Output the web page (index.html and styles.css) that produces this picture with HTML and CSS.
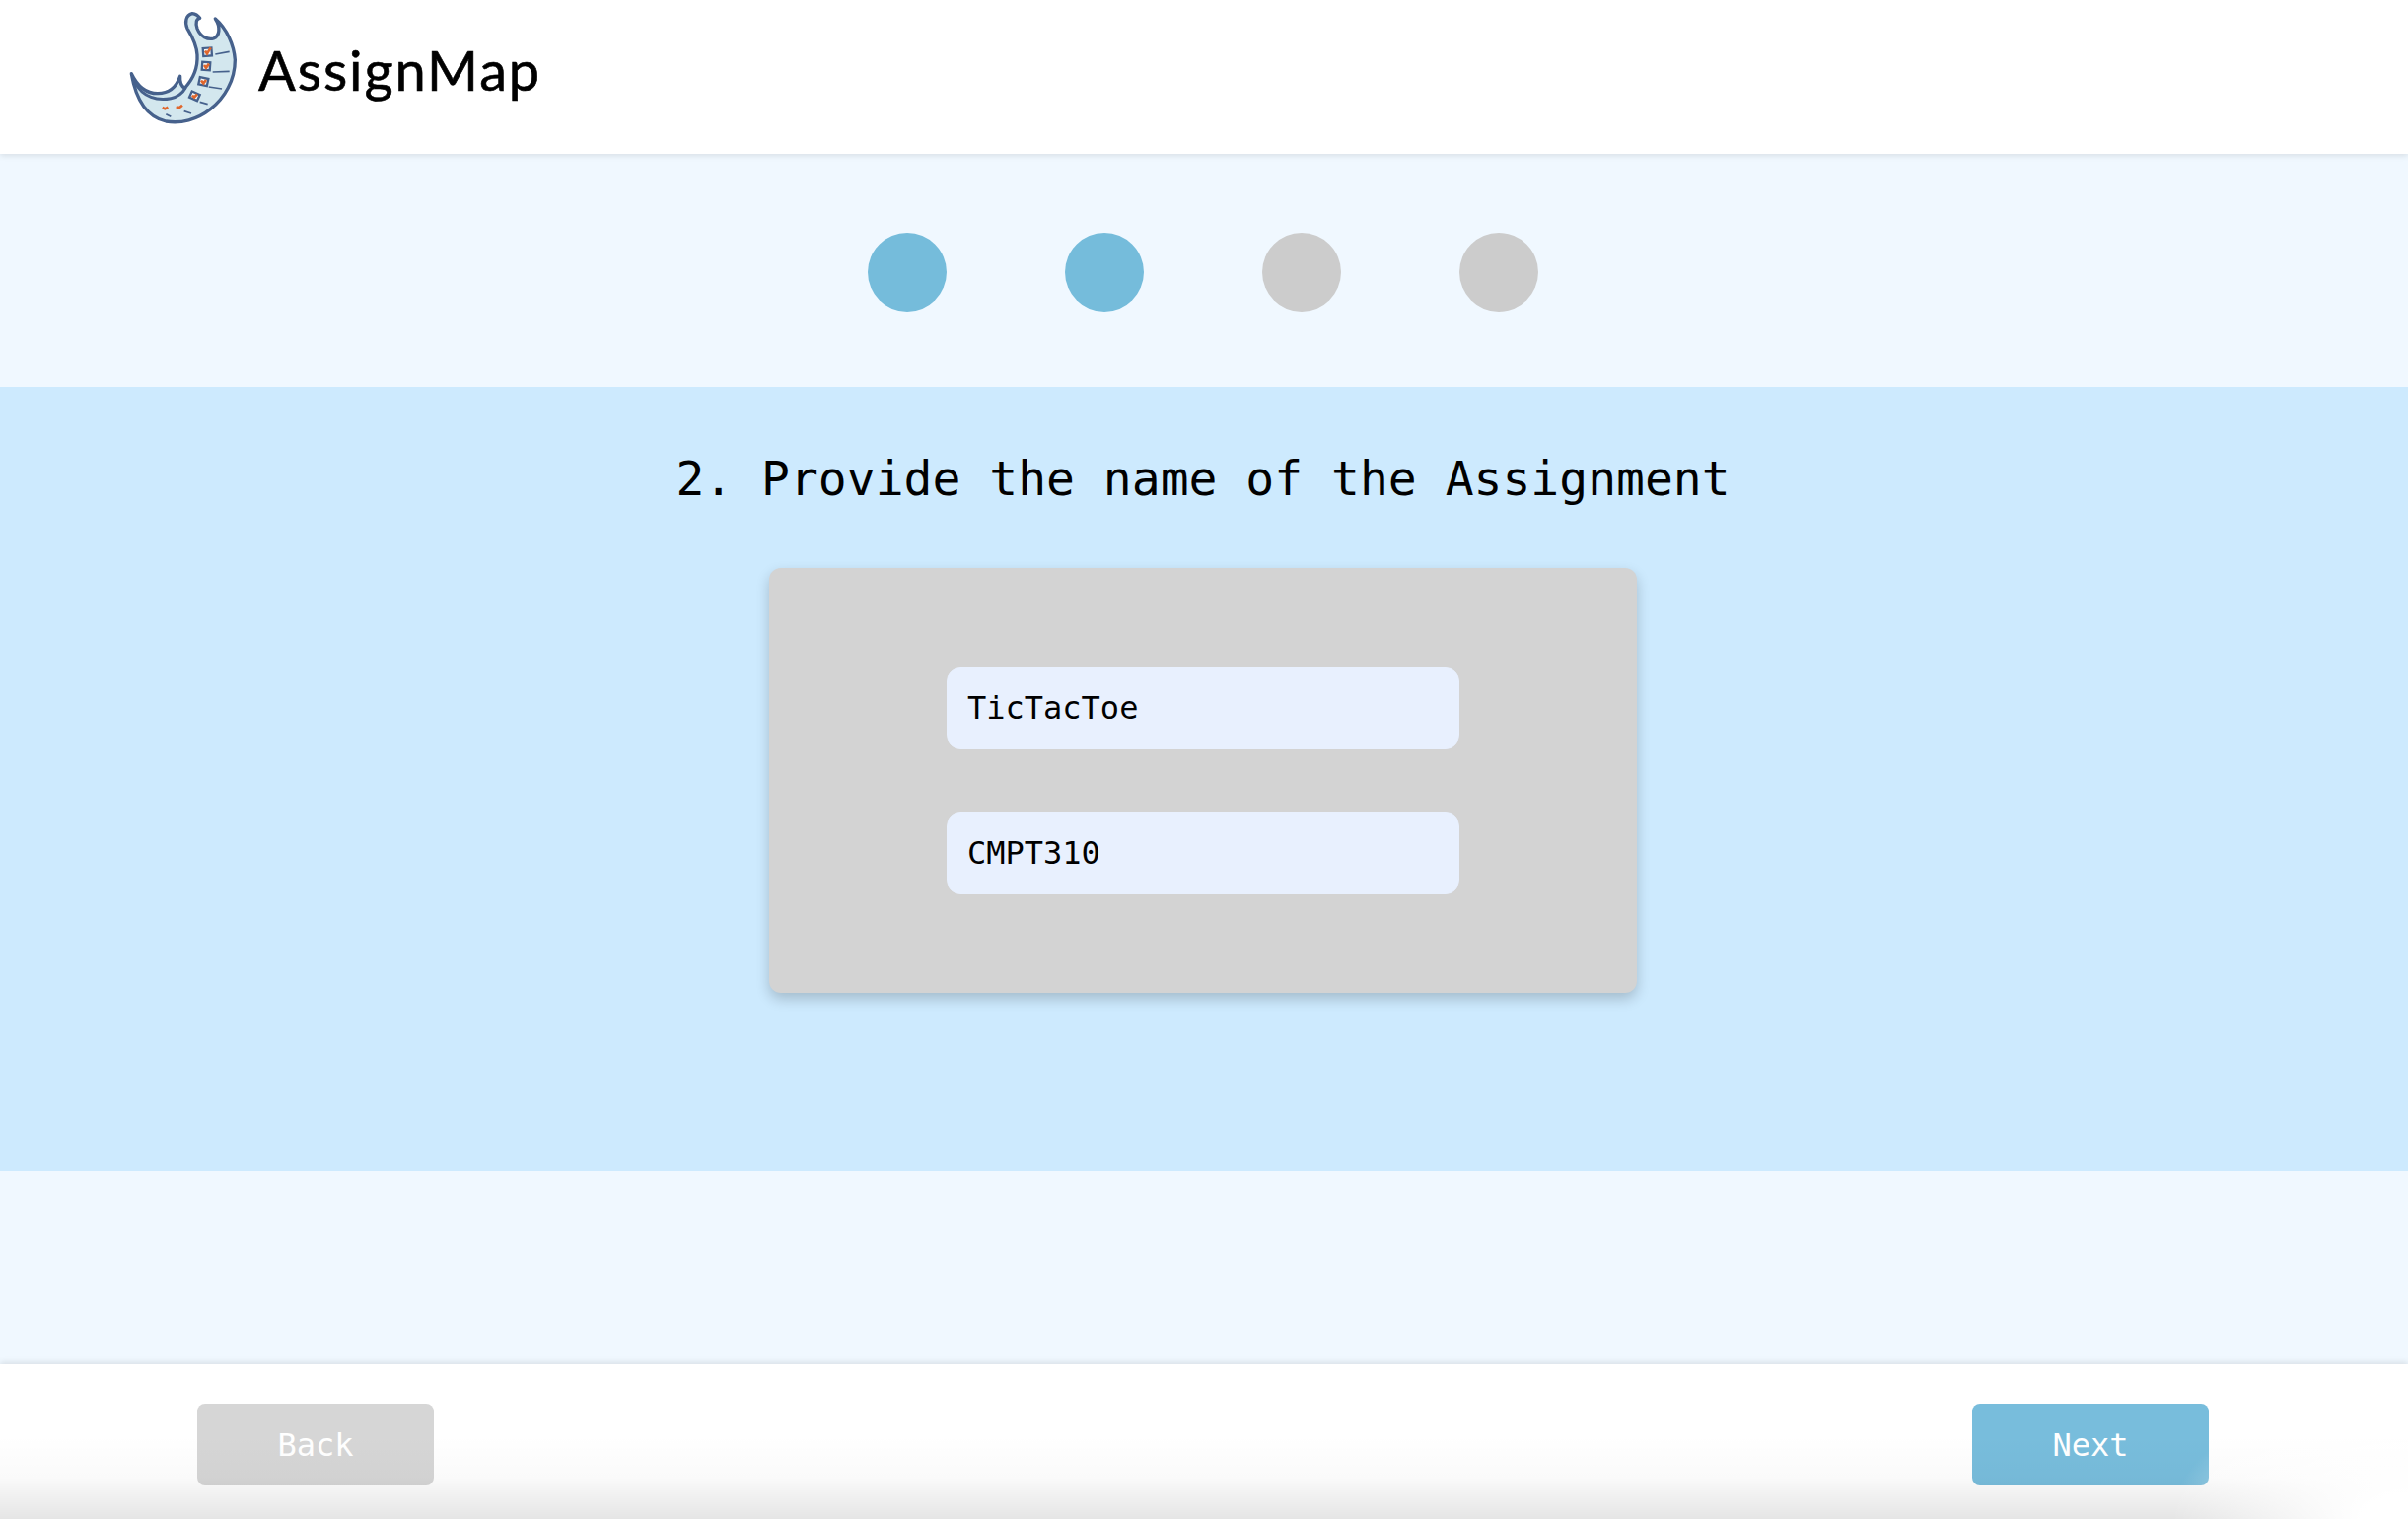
FILE: index.html
```html
<!DOCTYPE html>
<html lang="en">
<head>
    <meta charset="UTF-8">
    <meta name="viewport" content="width=device-width, initial-scale=1.0">
    <title>AssignMap</title>
    <link rel="stylesheet" href="styles.css">
</head>
<body>
    <header class="top-bar">
        <svg class="logo" viewBox="0 0 390 375" aria-hidden="true">
            <!-- crescent body -->
            <path class="logo-body" d="M40 212 C58 250 85 272 120 272 C150 272 175 258 188 220 C187 238 192 250 202 256 C228 228 242 190 240 155 C238 120 222 95 210 75 C202 55 205 35 225 29 C235 30 243 36 248 43 C238 45 234 55 240 75 C250 100 272 110 290 105 C308 98 312 70 295 45 C330 75 352 125 355 170 C355 230 325 285 280 320 C240 352 190 365 145 357 C95 345 55 300 40 212 Z"/>
            <path class="logo-line" d="M50 238 C75 285 120 295 160 287 C178 283 195 272 205 254"/>
            <!-- checklist -->
            <g class="logo-box">
                <rect x="258" y="134" width="26" height="24" transform="rotate(-4 271 146)"/>
                <rect x="255" y="177" width="24" height="24" transform="rotate(4 267 189)"/>
                <rect x="246" y="225" width="26" height="22" transform="rotate(12 259 236)"/>
                <rect x="219" y="270" width="26" height="20" transform="rotate(24 232 280)"/>
            </g>
            <g class="logo-tick">
                <path d="M264 143 L270 151 L281 133"/>
                <path d="M261 186 L267 194 L276 182"/>
                <path d="M252 233 L259 241 L267 231"/>
                <path d="M225 278 L231 284 L240 274"/>
                <path d="M176 313 L185 316 L195 308"/>
                <path d="M134 315 L142 319 L151 314"/>
            </g>
            <g class="logo-dash">
                <path d="M295 153 L338 145"/>
                <path d="M287 207 L338 205"/>
                <path d="M275 252 L315 258"/>
                <path d="M248 298 L272 305"/>
                <path d="M200 326 L222 333"/>
                <path d="M145 335 L160 343"/>
            </g>
        </svg>
        <span class="brand">AssignMap</span>
    </header>

    <div class="steps">
        <span class="step done"></span>
        <span class="step done"></span>
        <span class="step"></span>
        <span class="step"></span>
    </div>

    <main class="question">
        <h1>2. Provide the name of the Assignment</h1>
        <form class="card">
            <input class="field" type="text" value="TicTacToe">
            <input class="field" type="text" value="CMPT310">
        </form>
    </main>

    <div class="spacer"></div>

    <footer class="bottom-bar">
        <button class="btn back" type="button">Back</button>
        <button class="btn next" type="button">Next</button>
    </footer>
</body>
</html>
```

FILE: styles.css
```css
html, body {
    margin: 0;
    padding: 0;
    height: 100%;
}
body {
    display: flex;
    flex-direction: column;
    height: 1540px;
    overflow: hidden;
    background-color: #f0f8ff;
    font-family: "DejaVu Sans Mono", "Liberation Mono", monospace;
    color: #000;
}
.top-bar {
    display: flex;
    align-items: center;
    gap: 12px;
    height: 156px;
    padding: 0 0 24px 120px;
    box-sizing: border-box;
    background: white;
    box-shadow: 0 2px 6px rgba(0, 0, 0, 0.1);
    position: relative;
}
.logo {
    width: 130px;
    height: 125px;
}
.logo-body {
    fill: #d3e7ee;
    stroke: #46618c;
    stroke-width: 10;
    stroke-linejoin: round;
}
.logo-line {
    fill: none;
    stroke: #46618c;
    stroke-width: 9;
}
.logo-box rect {
    fill: #f2f6f8;
    stroke: #46618c;
    stroke-width: 7;
}
.logo-tick path {
    fill: none;
    stroke: #e0662c;
    stroke-width: 8;
}
.logo-dash path {
    fill: none;
    stroke: #46618c;
    stroke-width: 5;
}
.brand {
    margin-top: 8px;
    font-family: Lato, "Noto Sans", sans-serif;
    font-size: 56px;
    letter-spacing: 1.9px;
    -webkit-text-stroke: 0.6px #000;
}
.steps {
    display: flex;
    justify-content: center;
    gap: 120px;
    height: 236px;
    padding: 80px 2px 0 0;
    box-sizing: border-box;
}
.step {
    width: 80px;
    height: 80px;
    border-radius: 50%;
    background-color: #ccc;
}
.step.done {
    background-color: #75bcdb;
}
.question {
    display: flex;
    flex-direction: column;
    align-items: center;
    height: 795px;
    padding: 65px 2px 0 0;
    box-sizing: border-box;
    background-color: #cdeafe;
}
.question h1 {
    margin: 0 0 62px;
    font-size: 48px;
    line-height: 57px;
    font-weight: 400;
}
.card {
    display: flex;
    flex-direction: column;
    align-items: center;
    gap: 64px;
    width: 880px;
    padding: 100px 0 101px;
    border-radius: 12px;
    background-color: #d3d3d3;
    box-shadow: 0 6px 14px rgba(0, 0, 0, 0.2);
}
.field {
    width: 520px;
    height: 83px;
    padding: 0 20px;
    box-sizing: border-box;
    border: 1px solid #e8f0fe;
    border-radius: 14px;
    background-color: #e8f0fe;
    font-family: inherit;
    font-size: 32px;
    color: #000;
}
.spacer {
    flex: 1;
}
.bottom-bar {
    display: flex;
    justify-content: space-between;
    align-items: flex-start;
    height: 157px;
    padding: 40px 202px 0 200px;
    box-sizing: border-box;
    background: white;
    box-shadow: 0 -2px 6px rgba(0, 0, 0, 0.1);
    position: relative;
}
/* window shadow over the bottom edge */
.bottom-bar::after {
    content: "";
    position: absolute;
    left: 0;
    right: 0;
    bottom: 0;
    height: 85px;
    background: radial-gradient(ellipse 240px 130px at 100% 100%, white 20%, rgba(255, 255, 255, 0) 100%), linear-gradient(to bottom, rgba(0, 0, 0, 0), rgba(0, 0, 0, 0.02) 50%, rgba(0, 0, 0, 0.1));
    pointer-events: none;
}
.btn {
    width: 240px;
    height: 83px;
    border: none;
    border-radius: 8px;
    color: white;
    font-family: inherit;
    font-size: 32px;
    cursor: pointer;
}
.btn.back {
    background-color: #d6d6d6;
}
.btn.next {
    background-color: #78bddc;
}
```
